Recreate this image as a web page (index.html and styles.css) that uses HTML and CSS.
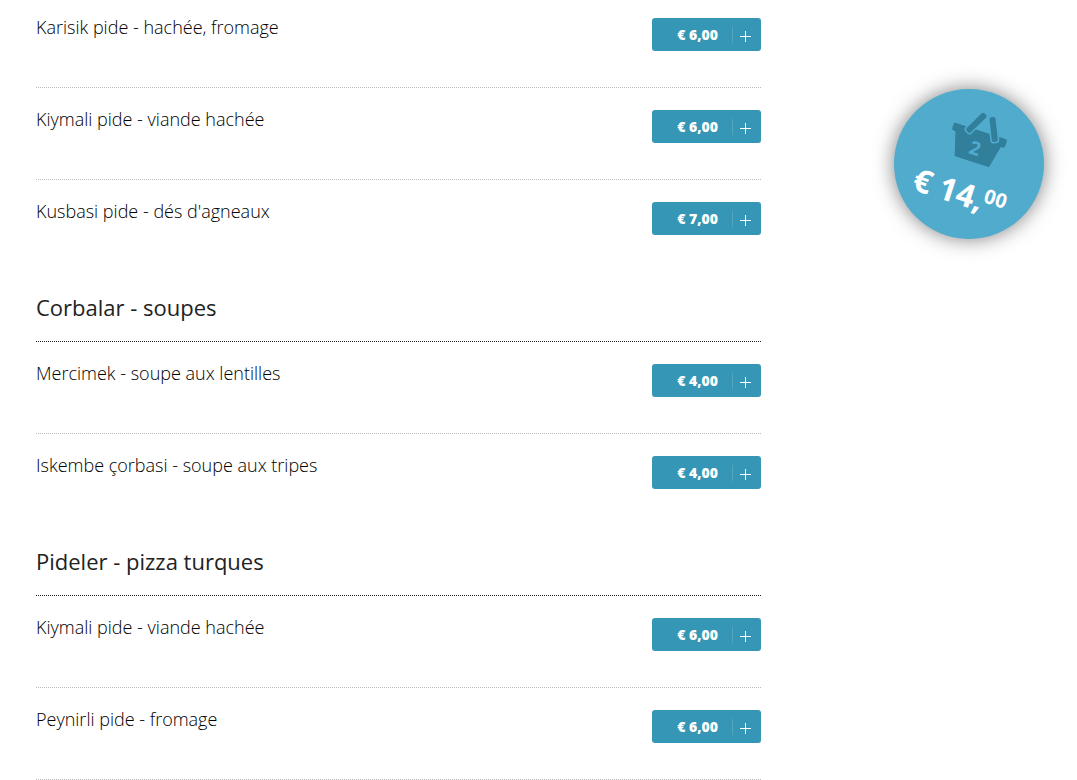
FILE: index.html
```html
<!DOCTYPE html>
<html lang="fr">
  <head>
    <meta charset="utf-8">
    <title>Menu</title>
    <link rel="stylesheet" href="styles.css">
  </head>
  <body>
    <div class="page">
      <main class="menu">
        <ul class="items">
          <li class="item">
            <span class="name">Karisik pide - hachée, fromage</span>
            <button class="add" type="button"><span class="price">€ 6,00</span><svg class="plus" viewBox="0 0 11 11"><path d="M5.5 0v11M0 5.5h11"/></svg></button>
          </li>
          <li class="item">
            <span class="name">Kiymali pide - viande hachée</span>
            <button class="add" type="button"><span class="price">€ 6,00</span><svg class="plus" viewBox="0 0 11 11"><path d="M5.5 0v11M0 5.5h11"/></svg></button>
          </li>
          <li class="item">
            <span class="name">Kusbasi pide - dés d'agneaux</span>
            <button class="add" type="button"><span class="price">€ 7,00</span><svg class="plus" viewBox="0 0 11 11"><path d="M5.5 0v11M0 5.5h11"/></svg></button>
          </li>
        </ul>

        <h2>Corbalar - soupes</h2>
        <ul class="items">
          <li class="item">
            <span class="name">Mercimek - soupe aux lentilles</span>
            <button class="add" type="button"><span class="price">€ 4,00</span><svg class="plus" viewBox="0 0 11 11"><path d="M5.5 0v11M0 5.5h11"/></svg></button>
          </li>
          <li class="item">
            <span class="name">Iskembe çorbasi - soupe aux tripes</span>
            <button class="add" type="button"><span class="price">€ 4,00</span><svg class="plus" viewBox="0 0 11 11"><path d="M5.5 0v11M0 5.5h11"/></svg></button>
          </li>
        </ul>

        <h2>Pideler - pizza turques</h2>
        <ul class="items">
          <li class="item">
            <span class="name">Kiymali pide - viande hachée</span>
            <button class="add" type="button"><span class="price">€ 6,00</span><svg class="plus" viewBox="0 0 11 11"><path d="M5.5 0v11M0 5.5h11"/></svg></button>
          </li>
          <li class="item">
            <span class="name">Peynirli pide - fromage</span>
            <button class="add" type="button"><span class="price">€ 6,00</span><svg class="plus" viewBox="0 0 11 11"><path d="M5.5 0v11M0 5.5h11"/></svg></button>
          </li>
          <!-- keeps the rule under the last row -->
          <li></li>
        </ul>
      </main>

      <a class="cart" href="#">
        <span class="cart-inner">
          <svg class="basket" viewBox="0 0 60 52">
            <path class="basket-body" d="M5 20H57Q59 20 59 22V27Q59 29 57 29H55L50 52H14L7 28H5Q3 28 3 26V22Q3 20 5 20Z"/>
            <rect class="handle" x="-3" y="-13" width="6" height="25" rx="2" transform="translate(24 14) rotate(28)"/>
            <rect class="handle" x="-3" y="-13" width="6" height="25" rx="2" transform="translate(43 15) rotate(-24)"/>
            <text class="count" x="31" y="45">2</text>
          </svg>
          <span class="total">€ 14,<span class="cents">00</span></span>
        </span>
      </a>
    </div>
  </body>
</html>
```
FILE: styles.css
```css
body {
  margin: 0;
  font-family: "Open Sans", sans-serif;
  color: #222;
  background: #fff;
}

.page {
  display: flex;
  align-items: flex-start;
  gap: 133px;
  padding: 0 33px 0 36px;
}

.menu {
  flex: 1;
  margin-top: -4px;
}

.items {
  margin: 0;
  padding: 0;
  list-style: none;
}

.item {
  display: flex;
  justify-content: space-between;
  align-items: flex-start;
  padding: 22px 0 36px;
}

.items li + li {
  border-top: 1px dotted #bbb;
}

.name {
  color: #000;
  font-size: 18px;
  font-weight: 300;
  line-height: 18px;
}

h2 {
  margin: 0;
  padding: 19px 0 17px;
  font-size: 22px;
  font-weight: 500;
  line-height: 34px;
  border-bottom: 1px dotted #222;
}

.add {
  display: flex;
  align-items: center;
  width: 109px;
  height: 33px;
  padding: 0 10px 0 0;
  border: 0;
  border-radius: 3px;
  background: #3696b5;
  color: #fff;
  font-family: inherit;
  font-size: 14px;
  font-weight: 800;
  cursor: pointer;
}

.price {
  flex: 1;
  padding: 0 14px 0 20px;
  line-height: 16px;
  text-align: right;
  border-right: 1px solid #52a4bf;
}

.plus {
  width: 11px;
  height: 11px;
  margin: 3px 0 0 7px;
  fill: none;
  stroke: #fff;
}

.cart {
  position: sticky;
  top: 89px;
  width: 150px;
  height: 150px;
  margin-top: 89px;
  border-radius: 50%;
  background: #50abcd;
  box-shadow: 0 0 20px rgba(0, 0, 0, 0.5);
  color: #fff;
  text-decoration: none;
}

.cart-inner {
  display: flex;
  flex-direction: column;
  align-items: center;
  padding-top: 20px;
  height: 130px;
  transform: rotate(18deg);
}

.basket {
  width: 60px;
  height: 52px;
}

.basket-body {
  fill: #317f9b;
}

.handle {
  fill: #317f9b;
  stroke: #50abcd;
  stroke-width: 3;
  paint-order: stroke;
}

.count {
  fill: #50abcd;
  font-size: 19px;
  font-weight: 700;
  text-anchor: middle;
}

.total {
  display: flex;
  font-size: 32px;
  font-weight: 700;
  line-height: 66px;
}

.cents {
  font-size: 20px;
  font-weight: 700;
  line-height: 56px;
}
```
